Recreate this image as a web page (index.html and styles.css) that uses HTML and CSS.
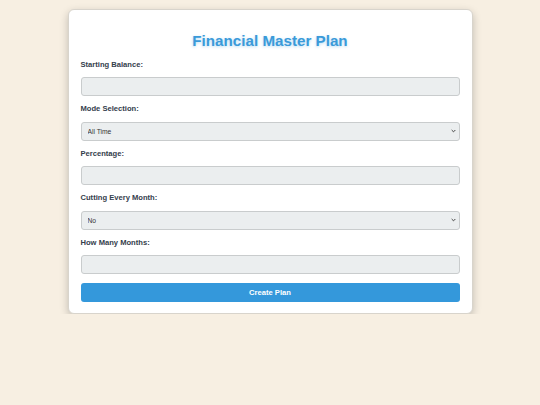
FILE: index.html
```html
<!DOCTYPE html>
<html>
<head>
<meta charset="utf-8">
<link rel="stylesheet" href="styles.css">
</head>
<body>
<div class="card">
  <h1 class="title">Financial Master Plan</h1>
  <label class="label" for="bal">Starting Balance:</label>
  <input class="field" id="bal" type="text">
  <label class="label" for="mode">Mode Selection:</label>
  <select class="field select" id="mode"><option>All Time</option></select>
  <label class="label" for="pct">Percentage:</label>
  <input class="field" id="pct" type="text">
  <label class="label" for="cut">Cutting Every Month:</label>
  <select class="field select" id="cut"><option>No</option></select>
  <label class="label" for="months">How Many Months:</label>
  <input class="field" id="months" type="text">
  <button class="btn">Create Plan</button>
</div>
</body>
</html>
```

FILE: styles.css
```css
html, body {
  margin: 0;
  padding: 0;
}
body {
  background: #f7efe2;
  font-family: "Liberation Sans", Arial, sans-serif;
  padding-top: 9px;
}
.card {
  box-sizing: border-box;
  width: 405px;
  margin: 0 auto;
  background: #fff;
  border: 1px solid #d8d4cc;
  border-radius: 6px;
  box-shadow: 0 3px 8px rgba(0, 0, 0, 0.22);
  padding: 12px 12px 11px;
  display: flex;
  flex-direction: column;
}
.title {
  margin: 9px 0 7.5px;
  text-align: center;
  font-size: 15.2px;
  line-height: 20px;
  font-weight: bold;
  color: #3a9ad9;
  text-shadow: 0 1px 3px rgba(52, 152, 219, 0.35);
}
.label {
  display: block;
  font-size: 7.6px;
  line-height: 11px;
  font-weight: bold;
  color: #34404c;
  margin-bottom: 7.5px;
}
.field {
  box-sizing: border-box;
  display: block;
  width: 100%;
  height: 19px;
  margin: 0 0 7px;
  background-color: #ebeeef;
  border: 1px solid #c9cccd;
  border-radius: 3px;
  font-family: "Liberation Sans", Arial, sans-serif;
  font-size: 6.7px;
  color: #333;
  padding: 0 5px;
}
.select {
  -webkit-appearance: none;
  appearance: none;
  padding: 0 6px;
  background-image: url("data:image/svg+xml,%3Csvg xmlns='http://www.w3.org/2000/svg' width='6' height='4' viewBox='0 0 6 4'%3E%3Cpath d='M0.8 0.8 L3 3 L5.2 0.8' fill='none' stroke='%23444' stroke-width='1.2'/%3E%3C/svg%3E");
  background-repeat: no-repeat;
  background-position: right 3px center;
  background-size: 5px 4px;
}
.btn {
  box-sizing: border-box;
  width: 100%;
  height: 18.5px;
  margin-top: 2px;
  border: none;
  border-radius: 3px;
  background: #3498db;
  color: #fff;
  font-family: "Liberation Sans", Arial, sans-serif;
  font-size: 7.6px;
  font-weight: bold;
}
```
